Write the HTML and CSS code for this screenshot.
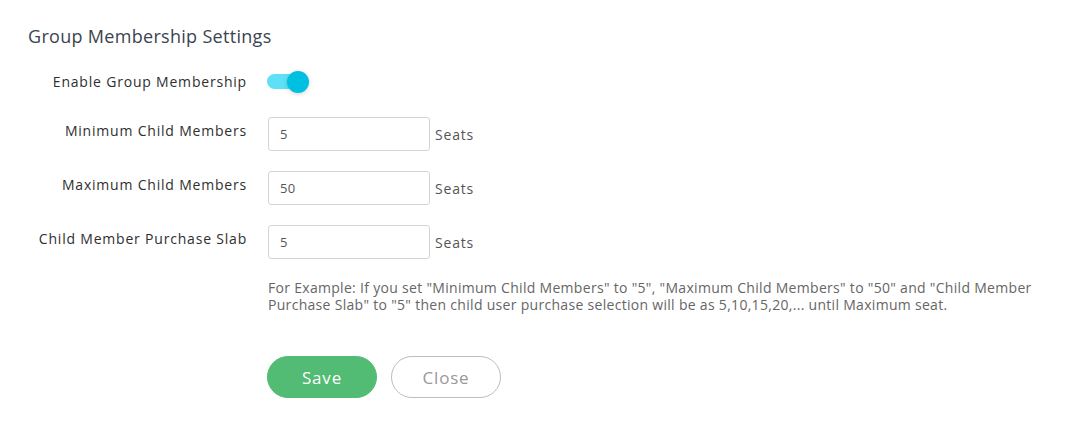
FILE: index.html
```html
<!DOCTYPE html>
<html>
<head>
<meta charset="utf-8">
<link rel="stylesheet" href="styles.css">
</head>
<body>
<div class="panel">
  <h2 class="title">Group Membership Settings</h2>
  <div class="form">
    <div class="row row-toggle">
      <label class="label">Enable Group Membership</label>
      <div class="field">
        <span class="switch"><span class="track"></span><span class="knob"></span></span>
      </div>
    </div>
    <div class="row row-input">
      <label class="label">Minimum Child Members</label>
      <div class="field"><input class="input" type="text" value="5"><span class="unit">Seats</span></div>
    </div>
    <div class="row row-input">
      <label class="label">Maximum Child Members</label>
      <div class="field"><input class="input" type="text" value="50"><span class="unit">Seats</span></div>
    </div>
    <div class="row row-input">
      <label class="label">Child Member Purchase Slab</label>
      <div class="field"><input class="input" type="text" value="5"><span class="unit">Seats</span></div>
    </div>
    <div class="row row-help">
      <div class="label"></div>
      <p class="help">For Example: If you set "Minimum Child Members" to "5", "Maximum Child Members" to "50" and "Child Member Purchase Slab" to "5" then child user purchase selection will be as 5,10,15,20,... until Maximum seat.</p>
    </div>
    <div class="row row-actions">
      <div class="label"></div>
      <div class="actions">
        <button class="btn btn-save">Save</button>
        <button class="btn btn-close">Close</button>
      </div>
    </div>
  </div>
</div>
</body>
</html>
```

FILE: styles.css
```css
* { box-sizing: border-box; }
html, body { margin: 0; padding: 0; background: #fff; }
body { font-family: "Open Sans", "Noto Sans", sans-serif; color: #333; }

.panel { padding: 24px 28px 0 28px; }

.title {
  margin: 0;
  font-size: 18px;
  font-weight: 400;
  letter-spacing: 0.3px;
  color: #3b4450;
  line-height: 24px;
}

.form { margin-top: 21px; display: flex; flex-direction: column; }

.row { display: flex; align-items: flex-start; }
.label {
  width: 219px;
  flex: none;
  text-align: right;
  font-size: 14px;
  letter-spacing: 0.8px;
  color: #2f2f2f;
  line-height: 20px;
}
.field { margin-left: 21px; display: flex; align-items: center; }

.row-toggle { height: 48px; }
.row-toggle .label { padding-top: 3px; }
.switch { position: relative; display: block; width: 44px; height: 22px; margin-top: 2px; margin-left: -2px; }
.track {
  position: absolute; left: 1px; top: 3px; width: 38px; height: 15px;
  border-radius: 8px; background: #5ee0f7;
}
.knob {
  position: absolute; left: 21px; top: 0; width: 22px; height: 22px;
  border-radius: 50%; background: #00c0e2;
  box-shadow: 0 1px 4px rgba(0,0,0,0.18);
}

.row-input { height: 54px; }
.row-input .label { padding-top: 4px; }

.input {
  width: 162px; height: 34px;
  border: 1px solid #d4d4d4; border-radius: 3px;
  padding: 0 11px;
  font-family: "Open Sans", "Noto Sans", sans-serif;
  font-size: 13px; letter-spacing: 0.3px; color: #555;
  outline: none;
}
.unit { margin-left: 5px; font-size: 14px; letter-spacing: 0.8px; color: #555; }

.help {
  margin: 0 0 0 21px;
  width: 800px;
  font-size: 14px;
  letter-spacing: 0.3px;
  line-height: 17px;
  color: #666;
}

.row-actions { margin-top: 43px; }
.actions { margin-left: 20px; display: flex; gap: 14px; }
.btn {
  width: 110px; height: 42px;
  border-radius: 21px;
  font-family: "Open Sans", "Noto Sans", sans-serif;
  font-size: 17px;
  letter-spacing: 0.8px;
  cursor: pointer;
}
.btn-save { background: #52bb74; border: 1px solid #52bb74; color: #fff; }
.btn-close { background: #fff; border: 1px solid #bdbdbd; color: #999; }
```
